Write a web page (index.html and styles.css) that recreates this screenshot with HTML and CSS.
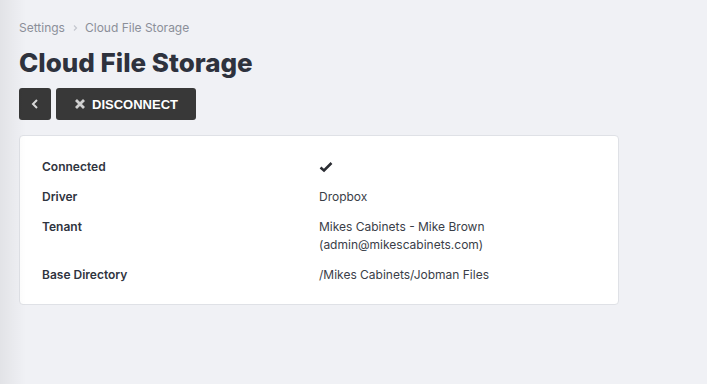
FILE: index.html
```html
<!DOCTYPE html>
<html lang="en">
<head>
    <meta charset="UTF-8">
    <meta name="viewport" content="width=device-width, initial-scale=1.0">
    <title>Cloud File Storage</title>
    <link rel="stylesheet" href="styles.css">
</head>
<body>

    <div class="page">
        <div class="breadcrumb">
            <span>Settings</span>
            <svg class="crumb-sep" viewBox="0 0 8 8" width="8" height="8">
                <path d="M3 1.5 L5.5 4 L3 6.5" fill="none" stroke="#c4c7cf" stroke-width="1.2"/>
            </svg>
            <span>Cloud File Storage</span>
        </div>

        <h1>Cloud File Storage</h1>

        <div class="actions">
            <button class="button button-icon">
                <svg viewBox="0 0 12 12" width="12" height="12">
                    <path d="M8 2 L4 6 L8 10" fill="none" stroke="#d8d8d8" stroke-width="2"/>
                </svg>
            </button>
            <button class="button">
                <svg viewBox="0 0 12 12" width="12" height="12">
                    <path d="M2 2 L10 10 M10 2 L2 10" fill="none" stroke="#d0d0d0" stroke-width="2.8"/>
                </svg>
                DISCONNECT
            </button>
        </div>

        <div class="card">
            <div class="row">
                <div class="label">Connected</div>
                <div class="value">
                    <svg viewBox="0 0 14 12" width="14" height="12">
                        <path d="M1.5 6.5 L5 9.5 L12.5 2" fill="none" stroke="#2b2d33" stroke-width="2.5"/>
                    </svg>
                </div>
            </div>
            <div class="row">
                <div class="label">Driver</div>
                <div class="value">Dropbox</div>
            </div>
            <div class="row">
                <div class="label">Tenant</div>
                <div class="value">Mikes Cabinets - Mike Brown<br>(admin@mikescabinets.com)</div>
            </div>
            <div class="row">
                <div class="label">Base Directory</div>
                <div class="value">/Mikes Cabinets/Jobman Files</div>
            </div>
        </div>
    </div>

</body>
</html>
```

FILE: styles.css
```css
body {
    margin: 0;
    padding: 0;
    font-family: 'Inter', sans-serif;
    background: #f0f1f5;
    color: #2f3440;
    height: 100vh;
    overflow: hidden;
    position: relative;
}

body::before {
    content: "";
    position: absolute;
    top: 0;
    left: 0;
    bottom: 0;
    width: 26px;
    background: linear-gradient(90deg, rgba(0, 0, 0, 0.06), rgba(0, 0, 0, 0));
    pointer-events: none;
}

.page {
    padding: 20px 19px 0 19px;
    width: 600px;
}

.breadcrumb {
    display: flex;
    align-items: center;
    gap: 6px;
    font-size: 12px;
    line-height: 16px;
    color: #8b8f99;
}

.crumb-sep {
    display: block;
}

h1 {
    font-size: 26px;
    font-weight: 800;
    line-height: 36px;
    margin: 9px 0 7px 0;
    color: #2e323d;
}

.actions {
    display: flex;
    gap: 5px;
}

.button {
    height: 32px;
    width: 140px;
    background: #383838;
    color: #ffffff;
    border: none;
    border-radius: 3px;
    font-family: 'Liberation Sans', Arial, sans-serif;
    font-size: 13px;
    font-weight: bold;
    display: flex;
    align-items: center;
    justify-content: center;
    gap: 6px;
    padding: 0;
    cursor: pointer;
}

.button-icon {
    width: 32px;
}

.card {
    margin-top: 15px;
    width: 554px;
    background: #ffffff;
    border: 1px solid #dfe1e6;
    border-radius: 4px;
    padding: 16px 22px 14px 22px;
    font-size: 12px;
    line-height: 18px;
}

.row {
    display: grid;
    grid-template-columns: 1fr 1fr;
    padding: 6px 0;
}

.label {
    font-weight: 600;
    color: #2f3440;
}

.value {
    color: #3a3e48;
    display: flex;
    align-items: center;
}

.value svg {
    display: block;
}
```
